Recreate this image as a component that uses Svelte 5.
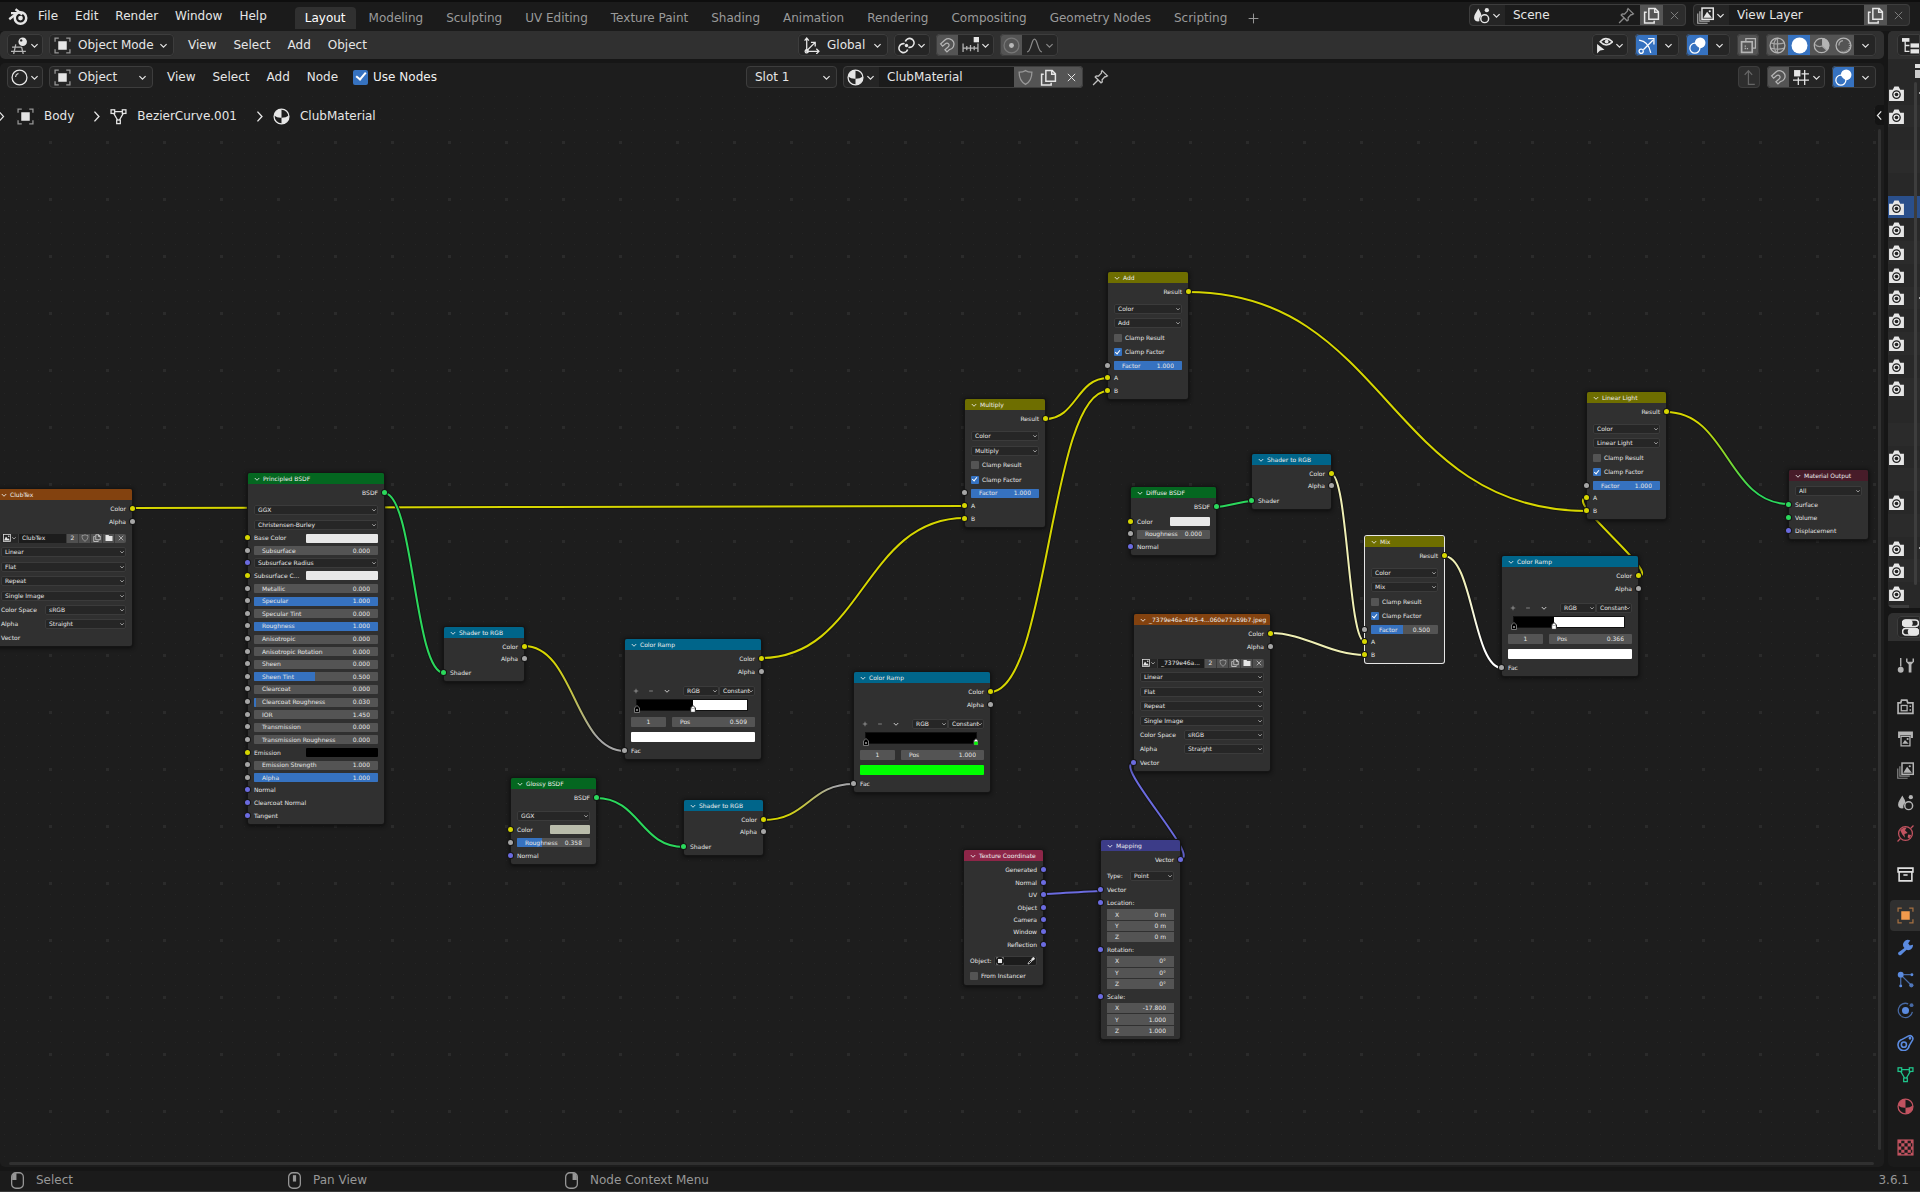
<script>
  const menusTop = ['File', 'Edit', 'Render', 'Window', 'Help'];
  const workspaces = ['Layout', 'Modeling', 'Sculpting', 'UV Editing', 'Texture Paint', 'Shading', 'Animation', 'Rendering', 'Compositing', 'Geometry Nodes', 'Scripting'];

  const Y = '#d6d600';
  const G = '#2bd85c';
  const V = '#6b6be0';
  const F = '#a6a6a6';

  const out = (label, c) => ({ t: 'out', label, c });
  const inp = (label, c) => ({ t: 'in', label, c });
  const menu = (value, c) => ({ t: 'menu', value, c });
  const num = (label, value, fill = 0, c = F) => ({ t: 'num', label, value, fill, c });
  const swatch = (label, color, wide = 0) => ({ t: 'color', label, color, wide, c: Y });
  const check = (label, on = false) => ({ t: 'check', label, on });
  const gap = (s = 'm') => ({ t: 'gap', s });
  const pair = (label, value) => ({ t: 'pair', label, value });
  const vec = (label, values) => ({ t: 'vec', label, values });

  const mixRows = (mode, factor, fill) => [
    out('Result', Y), gap(), menu('Color'), menu(mode), check('Clamp Result'), check('Clamp Factor', true),
    num('Factor', factor, fill), inp('A', Y), inp('B', Y)
  ];
  const rampRows = (pos, color) => [out('Color', Y), out('Alpha', F), { t: 'ramp', pos, color }, inp('Fac', F)];
  const toRgbRows = [out('Color', Y), out('Alpha', F), gap('s'), inp('Shader', G)];
  const imageRows = (name, c) => [
    out('Color', Y), out('Alpha', F), gap(), { t: 'image', name }, menu('Linear'), menu('Flat'), menu('Repeat'),
    menu('Single Image'), pair('Color Space', 'sRGB'), pair('Alpha', 'Straight'), inp('Vector', c)
  ];

  const nodes = [
    { title: 'ClubTex', kind: 'texture', x: -5, y: 426, w: 137, h: 157, rows: imageRows('ClubTex', V) },
    { title: 'Principled BSDF', kind: 'shader', x: 248, y: 410, w: 136, h: 351, rows: [
      out('BSDF', G), gap(), menu('GGX'), menu('Christensen-Burley'),
      swatch('Base Color', '#e8e8e8', 1), num('Subsurface', '0.000'), { ...menu('Subsurface Radius', V), tight: true },
      swatch('Subsurface C...', '#e8e8e8', 1), num('Metallic', '0.000'), num('Specular', '1.000', 100),
      num('Specular Tint', '0.000'), num('Roughness', '1.000', 100), num('Anisotropic', '0.000'),
      num('Anisotropic Rotation', '0.000'), num('Sheen', '0.000'), num('Sheen Tint', '0.500', 49),
      num('Clearcoat', '0.000'), num('Clearcoat Roughness', '0.030', 2), num('IOR', '1.450'),
      num('Transmission', '0.000'), num('Transmission Roughness', '0.000'), swatch('Emission', '#000000', 1),
      num('Emission Strength', '1.000'), num('Alpha', '1.000', 100),
      inp('Normal', V), inp('Clearcoat Normal', V), inp('Tangent', V)
    ] },
    { title: 'Shader to RGB', kind: 'converter', x: 444, y: 564, w: 80, h: 54, rows: toRgbRows },
    { title: 'Color Ramp', kind: 'converter', x: 625, y: 576, w: 136, h: 120, rows: rampRows('0.509', '#ffffff') },
    { title: 'Color Ramp', kind: 'converter', x: 854, y: 609, w: 136, h: 120, rows: rampRows('1.000', '#00ff00') },
    { title: 'Glossy BSDF', kind: 'shader', x: 511, y: 715, w: 85, h: 86, rows: [
      out('BSDF', G), gap(), menu('GGX'), swatch('Color', '#b9bcab'), num('Roughness', '0.358', 34), inp('Normal', V)
    ] },
    { title: 'Shader to RGB', kind: 'converter', x: 684, y: 737, w: 79, h: 55, rows: toRgbRows },
    { title: 'Add', kind: 'color', x: 1108, y: 209, w: 80, h: 127, rows: mixRows('Add', '1.000', 100) },
    { title: 'Multiply', kind: 'color', x: 965, y: 336, w: 80, h: 128, rows: mixRows('Multiply', '1.000', 100) },
    { title: 'Diffuse BSDF', kind: 'shader', x: 1131, y: 424, w: 85, h: 68, rows: [
      out('BSDF', G), gap('s'), swatch('Color', '#e8e8e8'), num('Roughness', '0.000'), inp('Normal', V)
    ] },
    { title: 'Shader to RGB', kind: 'converter', x: 1252, y: 391, w: 79, h: 55, rows: toRgbRows },
    { title: '_7379e46a-4f25-4...060e77a59b7.jpeg', kind: 'texture', x: 1134, y: 551, w: 136, h: 157, rows: imageRows('_7379e46a...', V) },
    { title: 'Mix', kind: 'color', x: 1365, y: 473, w: 79, h: 127, selected: true, rows: mixRows('Mix', '0.500', 48) },
    { title: 'Texture Coordinate', kind: 'input', x: 964, y: 787, w: 79, h: 135, rows: [
      ...['Generated', 'Normal', 'UV', 'Object', 'Camera', 'Window', 'Reflection'].map((l) => out(l, V)),
      gap(), { t: 'object' }, check('From Instancer')
    ] },
    { title: 'Mapping', kind: 'vector', x: 1101, y: 777, w: 79, h: 199, rows: [
      out('Vector', V), gap('s'), { t: 'type' }, inp('Vector', V),
      vec('Location:', ['0 m', '0 m', '0 m']), vec('Rotation:', ['0°', '0°', '0°']), vec('Scale:', ['-17.800', '1.000', '1.000'])
    ] },
    { title: 'Linear Light', kind: 'color', x: 1587, y: 329, w: 79, h: 127, rows: mixRows('Linear Light', '1.000', 100) },
    { title: 'Color Ramp', kind: 'converter', x: 1502, y: 493, w: 136, h: 120, rows: rampRows('0.366', '#ffffff') },
    { title: 'Material Output', kind: 'output', x: 1789, y: 407, w: 79, h: 69, rows: [
      menu('All'), inp('Surface', G), inp('Volume', G), inp('Displacement', V)
    ] }
  ];

  const SY = '#efefb4';
  const links = [
    [132, 445, 965, 443, Y, Y],
    [384, 430, 444, 610, G, G],
    [524, 583, 625, 688, Y, F],
    [761, 595, 965, 455, Y, Y],
    [596, 735, 684, 784, G, G],
    [763, 757, 854, 721, Y, F],
    [990, 629, 1108, 328, Y, Y],
    [1045, 356, 1108, 315, Y, Y],
    [1188, 229, 1587, 448, Y, Y],
    [1638, 513, 1587, 435, Y, Y],
    [1666, 349, 1789, 441, Y, G],
    [1216, 444, 1252, 438, G, G],
    [1331, 411, 1365, 579, SY, SY],
    [1270, 570, 1365, 592, SY, SY],
    [1444, 493, 1502, 605, SY, '#ffffff'],
    [1043, 831, 1101, 828, V, V],
    [1180, 796, 1134, 700, V, V]
  ];

  // Handles reach half the horizontal distance, shortened on nearly level links.
  function curve([x1, y1, x2, y2]) {
    const dx = Math.abs(x2 - x1) || 1;
    const slope = Math.abs(y2 - y1) / dx;
    const reach = dx * 0.5 * Math.min(1, slope * 3.25);
    return `M${x1} ${y1}C${x1 + reach} ${y1} ${x2 - reach} ${y2} ${x2} ${y2}`;
  }

  const rendered = [0, 1, 5, 6, 7, 8, 9, 10, 11, 12, 13, 16, 18, 20, 21, 22];
  const outlinerRows = Array.from({ length: 23 }, (_, i) => ({ cam: rendered.includes(i), sel: i === 5, dot: [0, 9, 20].includes(i) }));

  const propTabs = [
    [['tool', 'Tool', '#b4b4b4']],
    [['render', 'Render', '#b4b4b4'], ['printer', 'Output', '#b4b4b4'], ['layers', 'View Layer', '#b4b4b4'], ['scene', 'Scene', '#b4b4b4'], ['world', 'World', '#c25360']],
    [['archive', 'Collection', '#e0e0e0']],
    [['object', 'Object', '#f29a4c'], ['wrench', 'Modifiers', '#5b8be0'], ['particles', 'Particles', '#5b8be0'], ['physics', 'Physics', '#5b8be0'], ['constraint', 'Constraints', '#5b8be0'], ['mesh', 'Data', '#1fc48b'], ['material', 'Material', '#c25360']],
    [['texture', 'Texture', '#c25360']]
  ];

  const icons = {
    blender: '<path d="M1 10.600 7.200 5.700H2.400M6 2.600l5.500 4.200" stroke-width="1.900"/><circle cx="10" cy="9.600" r="4.600" stroke-width="2"/><circle cx="10" cy="9.600" r="1.900" fill="currentColor" stroke="none"/>',
    chevron: '<path d="M3.500 6 8 10.500 12.500 6" stroke-width="1.700"/>',
    right: '<path d="M5.500 2 11 8 5.500 14" stroke-width="1.700"/>',
    left: '<path d="M10.500 2 5 8l5.500 6" stroke-width="1.800"/>',
    object: '<path d="M4.500 1h-3.500v3.500M11.500 1h3.500v3.500M4.500 15h-3.500v-3.500M11.500 15h3.500v-3.500" opacity=".6"/><rect x="4" y="4" width="8" height="8" fill="currentColor" stroke="none"/>',
    view3d: '<path d="M1 9.500h9M0 13.500h14M4.500 7 2.500 16M10 9.500l1.500 6.500" opacity=".75"/><circle cx="11" cy="4.500" r="4" fill="currentColor" stroke="none"/><circle cx="9.600" cy="3.200" r="1.100" fill="#282828" stroke="none"/>',
    shading: '<circle cx="8" cy="8" r="7"/><path d="M4.200 7.500a4 4 0 0 1 2.800-3.300" opacity=".85"/>',
    material: '<circle cx="8" cy="8" r="7"/><path d="M8 1a7 7 0 0 0-6.900 6q3 2.600 6.900 2.200zM8 9.200V15a7 7 0 0 0 6.900-8Q12 9.300 8 9.200z" fill="currentColor" stroke="none"/>',
    mesh: '<path d="M4.400 3.400h7.200M3.500 5l3.600 6.300M12.500 5l-3.600 6.300"/><rect x="1" y="1.700" width="3.400" height="3.400"/><rect x="11.600" y="1.700" width="3.400" height="3.400"/><rect x="6.300" y="11.300" width="3.400" height="3.400"/>',
    axes: '<path d="M3.500 13.500V1.500M1.500 3.500l2-2.500 2 2.500M3 13.500h12M12.500 11l2.500 2.500-2.500 2.500M3.500 13 11 5.500M7.500 5H11.500v4"/><circle cx="3.500" cy="13.500" r="1.500"/>',
    pivot: '<path d="M9.100 11.800A4.200 4.200 0 1 1 6.200 6.400M6.900 4.200A4.200 4.200 0 1 1 9.800 9.600" stroke-width="1.500"/><circle cx="8" cy="8" r="1.600" fill="currentColor" stroke="none"/>',
    magnet: '<path d="M1.500 6.500 5.600 2.800a5.200 5.200 0 1 1 4.200 9.100L7.500 14 5.600 12l3-2.600a2 2 0 1 0-2.600-3L3.400 8.600z"/>',
    increment: '<path d="M1 6v8M15 6v8M1 10.500h14M4.500 8.500v4M8 7.500v6M11.500 8.500v4" opacity=".75"/><rect x="11" y="0" width="5" height="5" fill="currentColor" stroke="none"/>',
    proportional: '<circle cx="8" cy="8" r="7" opacity=".35"/><circle cx="8" cy="8" r="2.300" fill="currentColor" stroke="none"/>',
    falloff: '<path d="M1 14c4 0 4-12 7-12s3 12 7 12"/>',
    shield: '<path d="M8 1.500q3 1.700 6 1.500c0 6-1.500 9-6 11.500C3.500 12 2 9 2 3q3 .2 6-1.500z" opacity=".7"/>',
    copy: '<path d="M5.500 1.500h6l3 3v7h-9zM11 1.500V5h3.500" stroke-width="1.400"/><path d="M3.500 5H1.500v10h9v-2" stroke-width="1.400"/>',
    close: '<path d="m3.500 3.500 9 9M12.500 3.500l-9 9"/>',
    plus: '<path d="M8 2v12M2 8h12"/>',
    minus: '<path d="M3 8h10"/>',
    pin: '<path d="m9.500 1.500 5 5-1.500.8-.7-.2-2.800 3 .2 2L8.500 13 3 7.500l1-1 2.200.1 2.800-3-.2-.9zM5.700 10.300 1 15"/>',
    scene: '<path d="M5 1.500c2 3.500 3 5 3 7q-2.500 1-2 5C3 14 1 12.500 1 10c0-2.500 2-4.500 4-8.500z" fill="currentColor" stroke="none"/><circle cx="13" cy="3" r="2" fill="currentColor" stroke="none"/><circle cx="11" cy="11" r="3.700" stroke-width="1.400"/>',
    layers: '<path d="M.700 6v9.300H10M2.700 4v9.300H12" stroke-width="1.100" opacity=".7"/><rect x="4.700" y="1" width="10.600" height="10.600" stroke-width="1.400"/><path d="m6 10 3.500-5.500L14 10z" fill="currentColor" stroke="none"/><circle cx="12" cy="4" r="1" fill="currentColor" stroke="none"/>',
    eye: '<path d="M4 4.500q5-6 11.500 0-6 6-11.500 0z" stroke-width="1.500"/><circle cx="10" cy="4.300" r="1.800" fill="currentColor" stroke="none"/><path d="M1 6.500v9l2.800-2.700L8 12z" fill="currentColor" stroke="none"/>',
    gizmo: '<path d="M1 3q9 1 11 12M5 12 14 3M9.500 1.500H15v5.500"/><circle cx="3" cy="13.500" r="2"/>',
    overlay: '<circle cx="10.500" cy="5.500" r="5" fill="currentColor" stroke="none"/><circle cx="5.500" cy="10.500" r="4.700"/><path d="M5.800 7a5 5 0 0 0 3.400 3.500" stroke="#3a72bd"/>',
    xray: '<path d="M5.500 4V1.500h9v9H12" /><rect x="1.500" y="4.500" width="10" height="10" stroke-width="1.600"/><path d="M5 8v3h3" stroke-dasharray="1.200 1"/>',
    wire: '<circle cx="8" cy="8" r="7"/><path d="M8 1v14M1.500 5.500q6.500 2 13 0M1.500 10.500q6.500 2 13 0M8 1C3.500 4 3.500 12 8 15" opacity=".85"/>',
    solid: '<circle cx="8" cy="8" r="7.500" fill="currentColor" stroke="none"/>',
    preview: '<circle cx="8" cy="8" r="6.800"/><path d="M8.500 1v7l5 4.500a7 7 0 0 0 1-8A7 7 0 0 0 8.500 1z" fill="currentColor" stroke="none"/><path d="M2 7q3 3 6.500 1.500l4.500 4" opacity=".8"/>',
    rendered: '<circle cx="8" cy="8" r="7"/><path d="M3.700 8A4.500 4.500 0 0 1 7.500 3.500" opacity=".85"/><path d="M13.500 5.500a6 6 0 0 1-8 8" stroke-width="2" stroke-dasharray="1 1" opacity=".7"/>',
    up: '<path d="M7 2v12.500h6M3.500 5.500 7 1.500l3.500 4"/>',
    gridsnap: '<path d="M0 10.500h15M5 8v7M11 1v14M8 4.500h7M1 14"/><rect x="1" y="1" width="6" height="6" fill="currentColor" stroke="none"/>',
    outliner: '<rect x="0" y="1" width="7" height="3.500" fill="currentColor" stroke="none"/><path d="M3 4v9.500h4M3 8h4"/><rect x="8" y="6" width="8" height="4" fill="currentColor" stroke="none"/><rect x="8" y="11.500" width="8" height="4" fill="currentColor" stroke="none"/>',
    camera: '<path d="M1 4.500h3.500L6 1.500h4l1.500 3H15V15H1z" fill="currentColor" stroke="none"/><circle cx="8" cy="9" r="3.500" fill="#e8e8e8" stroke="#222"/><circle cx="8" cy="9" r="1.700" fill="#222" stroke="none"/>',
    toggles: '<rect x=".500" y="1" width="15" height="6" rx="3" fill="none" stroke-width="1.500"/><rect x=".500" y="1" width="9" height="6" rx="3" fill="currentColor"/><rect x=".500" y="9" width="15" height="6" rx="3" stroke-width="1.500"/><rect x="6" y="9" width="9.500" height="6" rx="3" fill="currentColor"/>',
    tool: '<path d="M3.500 1v8" stroke-width="1.300"/><circle cx="3.500" cy="12" r="2.800" fill="currentColor" stroke="none"/><path d="M8.500 1.500v3l2.500 2.500V14.500h2.600V7l2.400-2.500v-3h-1.400V4.500h-4.700v-3z" fill="currentColor" stroke="none"/>',
    render: '<path d="M1 4.500h2.500l.8-2.500h5l.8 2.500H15v10H1z" stroke-width="1.600"/><rect x="4" y="7" width="5.500" height="5"/><path d="M12.500 7v1.500M12.500 10.500V12" stroke-width="1.500"/>',
    printer: '<path d="M1 1.500h14v6h-2v-2.500H3v2.500H1z" fill="currentColor" stroke="none"/><path d="M3.800 6h8.400v9H3.800z" stroke-width="1.200"/><path d="m5 13 2.500-3.500L11 13z" fill="currentColor" stroke="none"/><circle cx="10" cy="8.500" r="1" fill="currentColor" stroke="none"/>',
    world: '<circle cx="8" cy="8" r="6.500"/><path d="M3 5q3-3.500 6-2.500L7.500 5 10 7.500 7 8.500 7.500 12 5 9zM10.500 9l3 .5-2 3.500-1.500-1.500z" fill="currentColor" stroke="none"/><path d="M13 3l2.500-2.500M3 13 .500 15.500"/>',
    archive: '<path d="M1 2h14v3.500H1zM2 5.500h12V14H2zM6 8.500h4" stroke-width="1.500"/>',
    wrench: '<path d="M1.500 12.500 7 8.500A4.500 4.500 0 0 1 12.500 1.500L10.500 4l1.500 2 3-.7A4.500 4.500 0 0 1 9 10.200L4 14.800a1.700 1.700 0 0 1-2.500-2.300z" fill="currentColor" stroke="none"/>',
    particles: '<circle cx="3.500" cy="3.500" r="2.800" fill="currentColor" stroke="none"/><path d="M6 3.500h7M3.500 6v7M5.500 5.500 13 13" opacity=".7"/><circle cx="14" cy="3.500" r="1.400" fill="currentColor" stroke="none"/><circle cx="3.500" cy="14" r="1.400" fill="currentColor" stroke="none"/><circle cx="13.500" cy="13.500" r="2" fill="currentColor" stroke="none" opacity=".8"/>',
    physics: '<circle cx="8" cy="8" r="3.300" fill="currentColor" stroke="none"/><path d="M10.500 1.700a6.700 6.700 0 1 0 4 7.500" opacity=".7"/><circle cx="13.700" cy="3" r="1.800" fill="currentColor" stroke="none" opacity=".7"/>',
    constraint: '<path d="M4 5.500 11 1.800a2.800 2.800 0 0 1 3.700 3.700L11.500 11A5.300 5.300 0 1 1 4 5.500z" stroke-width="1.500"/><circle cx="6.500" cy="10" r="2.400" stroke-width="1.500"/><circle cx="12.200" cy="4" r=".700" fill="currentColor"/>',
    texture: '<rect x="1" y="1" width="14" height="14"/><path d="M1 1h3v3H1zM7 1h3v3H7zM13 1h2v3h-2zM4 4h3v3H4zM10 4h3v3h-3zM1 7h3v3H1zM7 7h3v3H7zM13 7h2v3h-2zM4 10h3v3H4zM10 10h3v3h-3zM1 13h3v2H1zM7 13h3v2H7zM13 13h2v2h-2z" fill="currentColor" stroke="none"/>',
    image: '<rect x="1" y="1" width="14" height="14" stroke-width="1.500"/><path d="m2 13 4-8 3.500 5L11 8.500l3 4.500z" fill="currentColor" stroke="none"/><circle cx="11.500" cy="4.500" r="1.500" fill="currentColor" stroke="none"/>',
    folder: '<path d="M1 2h6l1.500 2H15v10H1z" fill="currentColor" stroke="none"/>',
    dropper: '<path d="m2 14 1-3 5-5 2 2-5 5zM10 3l3-2.500L15.500 3 13 6z" stroke-width="1.500"/><path d="m10 3 3-2.500L15.500 3 11.500 8 8 4.500z" fill="currentColor" stroke="none"/>',
    mouseL: '<rect x="2.500" y=".700" width="11" height="14.600" rx="4"/><path d="M3 7.500V4q0-3 4-3v6.500z" fill="currentColor" stroke="none"/>',
    mouseM: '<rect x="2.500" y=".700" width="11" height="14.600" rx="4"/><rect x="6.500" y="3" width="3" height="6" fill="currentColor" stroke="none"/>',
    mouseR: '<rect x="2.500" y=".700" width="11" height="14.600" rx="4"/><path d="M13 7.500V4q0-3-4-3v6.500z" fill="currentColor" stroke="none"/>'
  };
</script>

{#snippet icon(name, cls = '')}
  <svg class="icon {cls}" viewBox="0 0 16 16" fill="none" stroke="currentColor" stroke-width="1.2" aria-hidden="true">{@html icons[name]}</svg>
{/snippet}

{#snippet picker(name, label)}
  <button class="seg picker" aria-label={label}>{@render icon(name)}{@render icon('chevron', 'tiny')}</button>
{/snippet}

{#snippet dropdown(value, label, iconName, cls)}
  <label class="box dropdown {cls}">
    {#if iconName}{@render icon(iconName)}{/if}
    <select aria-label={label}><option>{value}</option></select>
    {@render icon('chevron', 'tiny')}
  </label>
{/snippet}

{#snippet nodeMenu(value, label = value)}
  <span class="nmenu">
    <select aria-label={label}><option>{value}</option></select>
    {@render icon('chevron', 'mini')}
  </span>
{/snippet}

{#snippet socket(c, side)}
  {#if c}<i class="socket {side}" style:background={c}></i>{/if}
{/snippet}

<div class="app">
  <header class="topbar">
    <button class="logo" aria-label="Blender">{@render icon('blender', 'big')}</button>
    <nav class="menus">
      {#each menusTop as m}<button>{m}</button>{/each}
    </nav>
    <nav class="tabs">
      {#each workspaces as w, i}<button class:active={i === 0}>{w}</button>{/each}
      <button class="add" aria-label="Add Workspace">{@render icon('plus', 'small')}</button>
    </nav>
    <div class="ids">
      <div class="box idbox">
        {@render picker('scene', 'Browse Scene')}
        <input class="name" aria-label="Scene name" value="Scene" />
        <span class="inpin">{@render icon('pin')}</span>
        <button class="seg lit" aria-label="New Scene">{@render icon('copy')}</button>
        <button class="seg off" aria-label="Delete Scene">{@render icon('close', 'small')}</button>
      </div>
      <div class="box idbox">
        {@render picker('layers', 'Browse View Layer')}
        <input class="name" aria-label="View layer name" value="View Layer" />
        <button class="seg lit" aria-label="New View Layer">{@render icon('copy')}</button>
        <button class="seg off" aria-label="Delete View Layer">{@render icon('close', 'small')}</button>
      </div>
    </div>
  </header>

  <div class="work">
    <div class="main">
      <header class="bar viewport">
        <div class="lead wide">
          <div class="box">{@render picker('view3d', 'Editor Type')}</div>
          {@render dropdown('Object Mode', 'Mode', 'object', 'mode')}
          <nav class="menus">
            {#each ['View', 'Select', 'Add', 'Object'] as m}<button>{m}</button>{/each}
          </nav>
        </div>
        <div class="group">
          {@render dropdown('Global', 'Transform Orientation', 'axes', 'orient')}
          <div class="box">{@render picker('pivot', 'Pivot Point')}</div>
          <div class="box">
            <button class="seg lit dim" aria-label="Snap">{@render icon('magnet')}</button>
            {@render picker('increment', 'Snap To')}
          </div>
          <div class="box faint">
            <button class="seg lit dim" aria-label="Proportional Editing">{@render icon('proportional')}</button>
            {@render picker('falloff', 'Falloff')}
          </div>
        </div>
        <div class="tail">
          <div class="box">{@render picker('eye', 'Object Visibility')}</div>
          <div class="box">
            <button class="seg on" aria-label="Show Gizmo">{@render icon('gizmo')}</button>
            <button class="seg" aria-label="Gizmos">{@render icon('chevron', 'tiny')}</button>
          </div>
          <div class="box">
            <button class="seg on" aria-label="Show Overlays">{@render icon('overlay')}</button>
            <button class="seg" aria-label="Overlays">{@render icon('chevron', 'tiny')}</button>
          </div>
          <div class="box"><button class="seg lit dim" aria-label="Toggle X-Ray">{@render icon('xray')}</button></div>
          <div class="box">
            <button class="seg lit dim" aria-label="Wireframe">{@render icon('wire')}</button>
            <button class="seg on" aria-label="Solid">{@render icon('solid')}</button>
            <button class="seg lit dim" aria-label="Material Preview">{@render icon('preview')}</button>
            <button class="seg lit dim" aria-label="Rendered">{@render icon('rendered')}</button>
            <button class="seg" aria-label="Shading">{@render icon('chevron', 'tiny')}</button>
          </div>
        </div>
      </header>

      <section class="editor">
        <svg class="wires" aria-hidden="true">
          <defs>
            <pattern id="dots" x="22" y="-63" width="57" height="57" patternUnits="userSpaceOnUse">
              {#each [0, 11, 23, 34, 46] as dx}
                {#each [0, 11, 23, 34, 46] as dy}
                  <rect x={dx + 5} y={dy + 5} width="1" height="1" fill="#242424" />
                {/each}
              {/each}
              <rect x="27" y="27" width="3" height="3" fill="#2b2b2b" />
            </pattern>
            {#each links as l, i}
              <linearGradient id="wire{i}" gradientUnits="userSpaceOnUse" x1={l[0]} y1={l[1]} x2={l[2]} y2={l[3]}>
                <stop offset="0.2" stop-color={l[4]} />
                <stop offset="0.8" stop-color={l[5]} />
              </linearGradient>
            {/each}
          </defs>
          <rect y="30" width="100%" height="100%" fill="url(#dots)" />
          {#each links as l, i}
            <path d={curve(l)} fill="none" stroke="#141414" stroke-width="4" />
            <path d={curve(l)} fill="none" stroke="url(#wire{i})" stroke-width="2" />
          {/each}
        </svg>

        <div class="canvas">
          {#each nodes as n}
            <article class="node" class:selected={n.selected} style:left="{n.x}px" style:top="{n.y}px" style:width="{n.w}px" style:height="{n.h}px">
              <h3 class={n.kind}>{@render icon('chevron', 'mini')}<span>{n.title}</span></h3>
              <div class="rows">
                {#each n.rows as r}
                  {#if r.t === 'out'}
                    <div class="row end">{r.label}{@render socket(r.c, 'r')}</div>
                  {:else if r.t === 'in'}
                    <div class="row">{r.label}{@render socket(r.c, 'l')}</div>
                  {:else if r.t === 'gap'}
                    <div class="gap {r.s}"></div>
                  {:else if r.t === 'menu'}
                    <div class="row" class:tall={!r.tight}>{@render nodeMenu(r.value)}{@render socket(r.c, 'l')}</div>
                  {:else if r.t === 'pair'}
                    <div class="row tall"><span class="plabel">{r.label}</span>{@render nodeMenu(r.value, r.label)}</div>
                  {:else if r.t === 'type'}
                    <div class="row tall"><span class="tlabel">Type:</span>{@render nodeMenu('Point', 'Type')}</div>
                  {:else if r.t === 'num'}
                    <div class="row">
                      <label class="num">
                        <i class="fill" style:width="{r.fill}%"></i>
                        <span>{r.label}</span><input value={r.value} />
                      </label>
                      {@render socket(r.c, 'l')}
                    </div>
                  {:else if r.t === 'color'}
                    <div class="row">
                      <span class="clabel">{r.label}</span>
                      <button class="swatch" class:wide={r.wide} aria-label={r.label} style:background={r.color}></button>
                      {@render socket(r.c, 'l')}
                    </div>
                  {:else if r.t === 'check'}
                    <label class="row tall"><input class="tick" type="checkbox" checked={r.on} />{r.label}</label>
                  {:else if r.t === 'image'}
                    <div class="row tall">
                      <div class="image">
                        <button class="pick" aria-label="Browse Image">{@render icon('image', 'mini')}{@render icon('chevron', 'micro')}</button>
                        <input aria-label="Image name" value={r.name} />
                        <button aria-label="Users">2</button>
                        <button aria-label="Fake User">{@render icon('shield', 'mini')}</button>
                        <button aria-label="New Image">{@render icon('copy', 'mini')}</button>
                        <button aria-label="Open Image">{@render icon('folder', 'mini')}</button>
                        <button aria-label="Unlink">{@render icon('close', 'mini')}</button>
                      </div>
                    </div>
                  {:else if r.t === 'object'}
                    <div class="row tall"><span>Object:</span><button class="objpick" aria-label="Object">{@render icon('object', 'mini')}{@render icon('dropper', 'mini')}</button></div>
                  {:else if r.t === 'vec'}
                    <div class="row">{r.label}{@render socket(V, 'l')}</div>
                    <div class="vec">
                      {#each r.values as v, k}
                        <label><span>{'XYZ'[k]}</span><input value={v} /></label>
                      {/each}
                    </div>
                  {:else if r.t === 'ramp'}
                    <div class="ramp">
                      <div class="rtools">
                        <button aria-label="Add Stop">{@render icon('plus', 'micro')}</button>
                        <button aria-label="Delete Stop">{@render icon('minus', 'micro')}</button>
                        <button aria-label="Tools">{@render icon('chevron', 'mini')}</button>
                        <span class="pairmenu">{@render nodeMenu('RGB', 'Color Mode')}{@render nodeMenu('Constant', 'Interpolation')}</span>
                      </div>
                      <div class="gradient">
                        <i class="lightpart" style:left="{r.pos * 100}%"></i>
                        <svg class="stop" style:left="0%" viewBox="0 0 6 8"><path d="M.5 3 3 .5 5.500 3v4.500h-5z" fill="#000" stroke="#777" /><path d="M2 4h2v2H2z" fill="#777" /></svg>
                        <svg class="stop" style:left="{r.pos * 100}%" viewBox="0 0 6 8"><path d="M.5 3 3 .5 5.500 3v4.500h-5z" fill="#fff" stroke="#222" /><path d="M1 3.500h4v3.500h-4z" fill={r.color} stroke="#777" stroke-width=".5" /></svg>
                      </div>
                      <div class="rpos">
                        <input aria-label="Stop" value="1" />
                        <label class="num"><span>Pos</span><input value={r.pos} /></label>
                      </div>
                      <button class="swatch full" aria-label="Stop Color" style:background={r.color}></button>
                    </div>
                  {/if}
                {/each}
              </div>
            </article>
          {/each}
        </div>

        <header class="bar shaderbar">
          <div class="lead">
            <div class="box">{@render picker('shading', 'Editor Type')}</div>
            {@render dropdown('Object', 'Shader Type', 'object', 'kind')}
            <nav class="menus">
              {#each ['View', 'Select', 'Add', 'Node'] as m}<button>{m}</button>{/each}
            </nav>
            <label class="use"><input class="tick" type="checkbox" checked />Use Nodes</label>
          </div>
          <div class="group">
            {@render dropdown('Slot 1', 'Material Slot', '', 'slot')}
            <div class="box matbox">
              {@render picker('material', 'Browse Material')}
              <input class="name" aria-label="Material name" value="ClubMaterial" />
              <button class="seg lit dim" aria-label="Fake User">{@render icon('shield')}</button>
              <button class="seg lit" aria-label="New Material">{@render icon('copy')}</button>
              <button class="seg lit" aria-label="Unlink">{@render icon('close', 'small')}</button>
            </div>
            <button class="plain" aria-label="Pin">{@render icon('pin')}</button>
          </div>
          <div class="tail">
            <div class="box faint"><button class="seg lit" aria-label="Parent Node Tree">{@render icon('up')}</button></div>
            <div class="box">
              <button class="seg lit dim" aria-label="Snap">{@render icon('magnet')}</button>
              {@render picker('gridsnap', 'Snap Node Element')}
            </div>
            <div class="box">
              <button class="seg on" aria-label="Show Overlays">{@render icon('overlay')}</button>
              <button class="seg" aria-label="Overlays">{@render icon('chevron', 'tiny')}</button>
            </div>
          </div>
        </header>

        <nav class="crumbs" aria-label="Context">
          {@render icon('right', 'tiny')}
          {@render icon('object')}<span class="crumb">Body</span>
          {@render icon('right', 'small')}
          {@render icon('mesh')}<span class="crumb">BezierCurve.001</span>
          {@render icon('right', 'small')}
          {@render icon('material')}<span>ClubMaterial</span>
        </nav>
        <button class="expand" aria-label="Show Sidebar">{@render icon('left', 'tiny')}</button>
        <div class="vscroll"></div>
        <div class="hscroll"></div>
      </section>
    </div>

    <aside class="side">
      <section class="outliner">
        <header><button class="box cut" aria-label="Editor Type">{@render icon('outliner')}</button></header>
        <div class="filter"><i></i></div>
        <div class="list">
          {#each outlinerRows as r}
            <div class="orow" class:sel={r.sel}>
              {#if r.cam}<button aria-label="Disable in Renders">{@render icon('camera')}</button>{/if}
              {#if r.dot}<i></i>{/if}
            </div>
          {/each}
          <div class="oscroll"></div>
        </div>
        <div class="oh"></div>
      </section>
      <section class="props">
        <header><button class="box cut" aria-label="Editor Type">{@render icon('toggles')}</button></header>
        <nav>
          {#each propTabs as grp}
            {#each grp as [name, label, c], i}
              <button class="ptab" class:first={i === 0} class:active={name === 'object'} aria-label={label} style:color={c}>{@render icon(name)}</button>
            {/each}
          {/each}
        </nav>
      </section>
    </aside>
  </div>

  <footer class="status">
    <span>{@render icon('mouseL')}Select</span>
    <span>{@render icon('mouseM')}Pan View</span>
    <span>{@render icon('mouseR')}Node Context Menu</span>
    <b>3.6.1</b>
  </footer>
</div>

<style>
  :global(body) { background: #161616; }
  .app {
    display: flex; flex-direction: column; min-height: 100vh; box-sizing: border-box; overflow: hidden;
    font: 12px/16px 'DejaVu Sans', Verdana, sans-serif; color: #e6e6e6; background: #161616;
  }
  button, input, select { font: inherit; color: inherit; background: none; border: 0; margin: 0; padding: 0; min-width: 0; border-radius: 0; outline: none; }
  select { appearance: none; }
  .icon { width: 17px; height: 17px; flex: none; display: block; }
  .icon.big { width: 20px; height: 20px; }
  .icon.small { width: 13px; height: 13px; }
  .icon.tiny { width: 11px; height: 11px; }
  .icon.mini { width: 8px; height: 8px; }
  .icon.micro { width: 6px; height: 6px; }

  .topbar { display: flex; height: 31px; background: #1b1b1b; border-top: 2px solid #0e0e0e; box-sizing: border-box; }
  .logo { margin: 3px 0 0 8px; height: 22px; }
  .menus { display: flex; align-items: center; gap: 17px; }
  .topbar .menus { height: 27px; margin-left: 10px; }
  .tabs { display: flex; gap: 3px; align-items: center; height: 22px; margin: 5px 0 0 28px; color: #9a9a9a; }
  .tabs button { height: 22px; padding: 0 10px; }
  .tabs .add { padding: 0 7px; }
  .tabs .active { background: #303030; color: #fff; border-radius: 4px 4px 0 0; }
  .ids { display: flex; gap: 7px; margin: 2px 10px 0 auto; }
  .idbox { width: 217px; }
  .idbox .seg:not(.picker), .matbox .seg:not(.picker) { width: 23px; }
  .name { flex: 1; padding: 0 8px; background: #1b1b1b; width: 0; }
  .inpin { display: flex; align-items: center; width: 22px; background: #1b1b1b; color: #8a8a8a; }

  .work { flex: 1; display: flex; gap: 4px; }
  .main { flex: 1; min-width: 0; display: flex; flex-direction: column; gap: 4px; }
  .bar { display: flex; align-items: center; height: 28px; padding: 0 8px 0 7px; box-sizing: border-box; }
  .viewport { background: #303030; border-radius: 5px; }
  .lead { display: flex; align-items: center; gap: 6px; flex: 0 1 739px; }
  .lead.wide { flex-basis: 791px; }
  .lead .menus { margin-left: 8px; }
  .group, .tail { display: flex; align-items: center; gap: 6px; }
  .tail { margin-left: auto; gap: 7px; }
  .box { display: flex; height: 22px; box-sizing: border-box; outline: 1px solid #3d3d3d; outline-offset: -1px; border-radius: 4px; background: #252525; overflow: hidden; }
  .seg { display: flex; align-items: center; justify-content: center; width: 22px; height: 22px; }
  .picker { width: 36px; gap: 1px; }
  .lit { background: #545454; }
  .dim { color: #b4b4b4; }
  .off { background: #2c2c2c; color: #7d7d7d; }
  .on { background: #3672c0; color: #fff; }
  .faint { color: #8a8a8a; }
  .faint .dim { color: #b8b8b8; }
  .shaderbar .faint .lit { background: #2e2e2e; color: #666; }
  .dropdown { align-items: center; padding: 0 5px; gap: 7px; }
  .dropdown select { flex: 1; width: 0; height: 20px; }
  .dropdown .tiny { margin-left: -7px; }
  .mode { width: 125px; }
  .kind { width: 104px; }
  .orient { width: 90px; }
  .slot { width: 91px; padding-left: 9px; }
  .matbox { width: 240px; }
  .plain { width: 22px; display: flex; justify-content: center; color: #c0c0c0; }
  .use { display: flex; align-items: center; gap: 5px; margin-left: 9px; color: #f0f0f0; }
  .tick { appearance: none; position: relative; flex: none; width: 15px; height: 15px; border-radius: 2px; background: #545454; }
  .tick:checked { background: #3672c0; }
  .tick:checked::before { content: ''; position: absolute; left: 30%; top: 6%; width: 25%; height: 55%; border: solid #fff; border-width: 0 2px 2px 0; transform: rotate(40deg); }

  .editor { position: relative; flex: 1; background: #1d1d1d; border-radius: 5px; overflow: hidden; }
  .wires, .canvas { position: absolute; inset: 0; width: 100%; height: 100%; }
  .shaderbar { position: relative; }
  .crumbs { position: relative; display: flex; align-items: center; gap: 10px; height: 20px; margin-top: 15px; margin-left: -4px; }
  .crumbs .crumb { margin-right: 6px; }
  .crumbs .small { margin-right: -3px; }
  .expand { position: absolute; right: 0; top: 42px; width: 9px; height: 20px; display: flex; align-items: center; justify-content: center; background: #141414; border-radius: 4px 0 0 4px; }
  .vscroll { position: absolute; right: 3px; top: 66px; bottom: 17px; width: 3px; border-radius: 2px; background: #303030; z-index: -1; }
  .hscroll { position: absolute; left: 9px; right: 10px; bottom: 2px; height: 3px; border-radius: 2px; background: #303030; }
  .vscroll { z-index: auto; }

  .node { position: absolute; display: flex; flex-direction: column; box-sizing: border-box; background: #303030; border-radius: 2px; box-shadow: 0 0 0 1px #151515, 0 1px 4px 1px #0c0c0c; font-size: 6px; line-height: 8px; color: #e6e6e6; white-space: nowrap; }
  .node.selected { box-shadow: 0 0 0 1px #e6e6e6; }
  h3 { display: flex; align-items: center; gap: 2px; height: 11px; flex: none; margin: 0; padding-left: 5px; font: inherit; border-radius: 2px 2px 0 0; color: #eeeeee; }
  .texture { background: #83420f; }
  .shader { background: #046720; }
  .converter { background: #00658a; }
  .color { background: #6e6e00; }
  .input { background: #8d2648; }
  .vector { background: #3c3c88; }
  .output { background: #471c29; }
  .rows { flex: 1; min-height: 0; display: flex; flex-direction: column; padding: 3px 0 2px; }
  .row { position: relative; display: flex; align-items: center; flex: 25 1 0; min-height: 0; padding: 0 6px; }
  .row.tall { flex-grow: 29; }
  .row.end { justify-content: flex-end; }
  .gap { height: 3px; flex: none; }
  .gap.s { height: 2px; }
  .socket { position: absolute; top: 50%; width: 5px; height: 5px; margin-top: -3px; border-radius: 50%; box-shadow: 0 0 0 1px #161616; }
  .socket.l { left: -3px; }
  .socket.r { right: -3px; }
  .nmenu { position: relative; flex: 1; display: flex; align-items: center; height: 10px; box-sizing: border-box; border: 1px solid #3b3b3b; border-radius: 2px; background: #262626; }
  .nmenu select { width: 100%; height: 8px; padding-left: 3px; line-height: 8px; }
  .nmenu .icon { position: absolute; right: 0; pointer-events: none; width: 6px; height: 6px; }
  .plabel { width: 44px; flex: none; }
  .tlabel { width: 23px; flex: none; }
  .num { position: relative; flex: 1; display: flex; align-items: center; height: 9px; background: #545454; border-radius: 1px; padding: 0 8px; overflow: hidden; }
  .num span, .num input { position: relative; }
  .num input { flex: 1; width: 0; text-align: right; height: 8px; }
  .fill { position: absolute; left: 0; top: 0; bottom: 0; background: #3672c0; }
  .clabel { flex: 1; }
  .swatch { width: 40px; height: 9px; border-radius: 1px; }
  .swatch.wide { width: 72px; }
  .swatch.full { width: 100%; height: 10px; margin-top: 5px; flex: none; }
  .node .tick { width: 8px; height: 8px; border-radius: 1px; margin-right: 3px; }
  .node .tick:checked::before { border-width: 0 1px 1px 0; }
  .image { flex: 1; display: flex; gap: 1px; height: 9px; background: #3a3a3a; border-radius: 2px; overflow: hidden; }
  .image button { width: 11px; background: #505050; display: flex; align-items: center; justify-content: center; }
  .image .pick { width: 17px; background: #262626; }
  .image input { flex: 1; width: 0; padding-left: 3px; background: #1c1c1c; }
  .objpick { flex: 1; margin-left: 2px; display: flex; align-items: center; justify-content: space-between; padding: 0 1px; height: 10px; border: 1px solid #3b3b3b; background: #1c1c1c; border-radius: 2px; box-sizing: border-box; }
  .vec { height: 34px; flex: none; display: grid; grid-template-rows: repeat(3, 1fr); gap: 1px; padding: 0 6px 1px; box-sizing: border-box; }
  .vec label { display: flex; align-items: center; background: #545454; padding: 0 8px; }
  .vec input { flex: 1; width: 0; text-align: right; height: 8px; }
  .ramp { flex: none; display: flex; flex-direction: column; padding: 7px 6px 2px; }
  .rtools { display: flex; align-items: center; height: 11px; padding-left: 2px; }
  .rtools button { width: 15px; height: 10px; }
  .pairmenu { flex: 0 0 72px; display: flex; margin-left: auto; }
  .gradient { position: relative; height: 12px; margin: 3px 7px 6px 5px; background: #000; border: 1px solid #111; box-sizing: border-box; }
  .lightpart { position: absolute; top: 0; bottom: 0; right: 0; background: #fff; }
  .stop { position: absolute; bottom: -3px; width: 6px; height: 8px; margin-left: -3px; }
  .rpos { display: flex; gap: 6px; height: 10px; }
  .rpos > input { width: 35px; text-align: center; background: #545454; border-radius: 1px; }
  .rpos .num { height: 10px; }

  .side { width: 32px; flex: none; display: flex; flex-direction: column; gap: 5px; }
  .outliner, .props { display: flex; flex-direction: column; overflow: hidden; border-radius: 5px 0 0 5px; }
  .outliner { flex: 577 1 0; background: #282828; }
  .props { flex: 554 1 0; background: #1a1a1a; }
  .side header { height: 28px; flex: none; background: #303030; display: flex; align-items: center; justify-content: flex-end; }
  .cut { width: 23px; border-radius: 4px 0 0 4px; align-items: center; padding-left: 5px; }
  .filter { height: 23px; display: flex; justify-content: flex-end; align-items: center; }
  .filter i { width: 5px; height: 14px; background: linear-gradient(#ddd 0 4px, #282828 4px 6px, #ccc 6px); }
  .list { flex: 1; position: relative; display: flex; flex-direction: column; }
  .orow { flex: 1; display: flex; align-items: center; justify-content: space-between; }
  .orow:nth-child(even) { background: #2b2b2b; }
  .orow.sel { background: #2a4f8b; }
  .orow i { margin-left: auto; width: 1px; height: 2px; background: #aaa; }
  .oscroll { position: absolute; right: 3px; top: 0; bottom: 20px; width: 3px; border-radius: 2px; background: #3d3d3d; }
  .oh { height: 3px; width: 21px; background: #3d3d3d; }
  .props nav { flex: 1; display: flex; flex-direction: column; padding: 0 0 4px 2px; }
  .ptab { flex: 1; display: flex; align-items: center; padding-left: 7px; }
  .ptab.first { margin-top: 9px; }
  .ptab.active { background: #303030; border-radius: 4px 0 0 4px; }

  .status { display: flex; align-items: center; height: 21px; margin-top: 4px; padding: 0 11px 2px 9px; box-sizing: border-box; background: #1b1b1b; color: #979797; border-bottom: 1px solid #3a3a3a; }
  .status span { display: flex; align-items: center; gap: 10px; width: 277px; }
  .status b { margin-left: auto; font-weight: normal; }
</style>
